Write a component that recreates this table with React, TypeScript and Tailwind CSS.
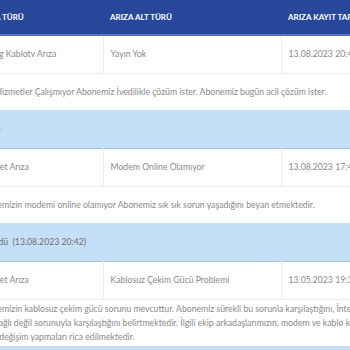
import React from 'react'

const rows = [
  {
    type: 'Analog Kablotv Arıza',
    sub: 'Yayın Yok',
    date: '13.08.2023 20:42',
    desc: ['Tüm Hizmetler Çalışmıyor Abonemiz İvedilikle çözüm ister. Abonemiz bugün acil çözüm ister.'],
    status: '(Aktif)',
  },
  {
    type: 'İnternet Arıza',
    sub: 'Modem Online Olamıyor',
    date: '13.08.2023 17:48',
    desc: ['Abonemizin modemi online olamıyor Abonemiz sık sık sorun yaşadığını beyan etmektedir.'],
    status: 'Çözüldü  (13.08.2023 20:42)',
  },
  {
    type: 'İnternet Arıza',
    sub: 'Kablosuz Çekim Gücü Problemi',
    date: '13.05.2023 19:36',
    desc: [
      'Abonemizin kablosuz çekim gücü sorunu mevcuttur. Abonemiz sürekli bu sorunla karşılaştığını, İnternet bağlantısının kablosuz olarak',
      'tam bağlı değil sorunuyla karşılaştığını belirtmektedir. İlgili ekip arkadaşlarımızın, modem ve kablo kontrolü',
      'ya da değişim yapmaları rica edilmektedir.',
    ],
    status: 'Çözüldü  (13.05.2023 21:10)',
  },
]

function App() {
  return (
    <div className="w-[350px] h-[350px] overflow-hidden bg-white font-['Lato',sans-serif]">
      <table className="-ml-[30px] w-[560px] table-fixed border-collapse">
        <colgroup>
          <col className="w-[133px]" />
          <col className="w-[178px]" />
          <col className="w-[249px]" />
        </colgroup>
        <thead>
          <tr className="h-[35px] bg-[#27489a] border-b-2 border-[#4f74c2] text-left text-[8px] font-bold text-white">
            <th className="pl-[7px] font-bold">ARIZA TÜRÜ</th>
            <th className="pl-[7px] font-bold">ARIZA ALT TÜRÜ</th>
            <th className="pl-[7px] font-bold whitespace-nowrap">ARIZA KAYIT TARİHİ</th>
          </tr>
        </thead>
        <tbody className="text-[8.7px] leading-[14px] text-[#8a8a8a]">
          {rows.map((r, i) => (
            <React.Fragment key={i}>
              {i > 0 && (
                <tr className="h-[38px] bg-[#c5dff7] border-b border-[#9dc4ea]">
                  <td colSpan={3} className="pl-[7px] text-[#6f6f6f] whitespace-pre">{rows[i - 1].status}</td>
                </tr>
              )}
              <tr className="h-[38px] border-b border-[#ececec]">
                <td className="pl-[7px] border-r border-[#ececec] whitespace-nowrap">{r.type}</td>
                <td className="pl-[7px] border-r border-[#ececec]">{r.sub}</td>
                <td className="pl-[7px] whitespace-nowrap">{r.date}</td>
              </tr>
              <tr className="h-[37px]">
                <td colSpan={3} className="pl-[7px] py-[2px] whitespace-nowrap">
                  {r.desc.map((line, j) => (
                    <div key={j}>{line}</div>
                  ))}
                </td>
              </tr>
            </React.Fragment>
          ))}
          <tr className="h-[38px] bg-[#c5dff7] border-b border-[#9dc4ea]">
            <td colSpan={3} className="pl-[7px] text-[#6f6f6f] whitespace-pre">{rows[2].status}</td>
          </tr>
        </tbody>
      </table>
    </div>
  )
}

export default App
